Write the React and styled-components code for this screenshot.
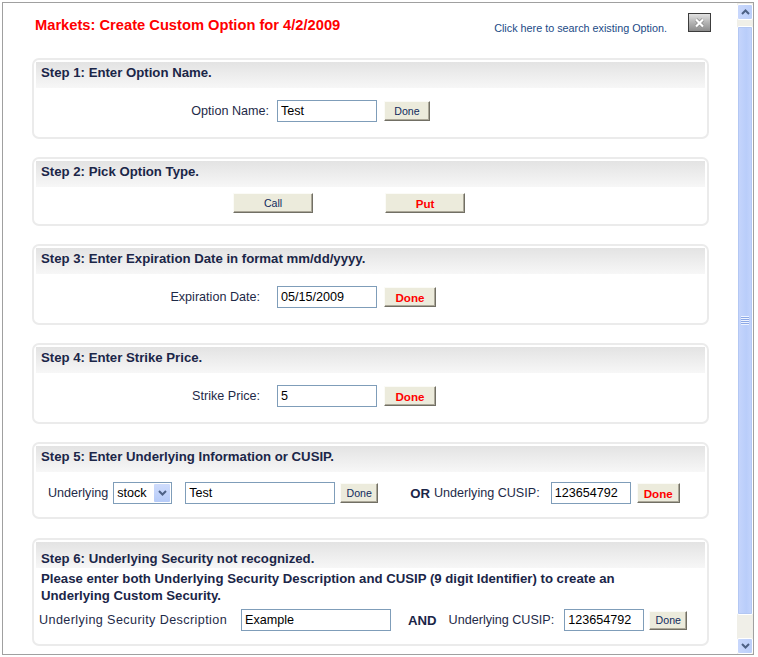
import React from 'react';
import styled, { createGlobalStyle } from 'styled-components';

const GlobalStyle = createGlobalStyle`
  html, body {
    margin: 0;
    padding: 0;
    background: #fff;
  }
  body {
    font-family: "Liberation Sans", Arial, sans-serif;
  }
`;

const Window = styled.div`
  margin: 2px 0 0 2px;
  width: 750px;
  height: 651px;
  border: 1px solid #a0a0a0;
  display: flex;
  background: #fff;
  overflow: hidden;
`;

const Content = styled.div`
  flex: 1;
  overflow: hidden;
  padding: 10px 28px 0 29px;
`;

const TopBar = styled.div`
  display: flex;
  align-items: flex-start;
  margin-right: -2px;
`;

const Title = styled.h1`
  margin: 4px 0 0 3px;
  font-size: 14.7px;
  line-height: 16px;
  font-weight: bold;
  color: #ff0000;
`;

const SearchLink = styled.a`
  margin: 9px 0 0 auto;
  font-size: 10.8px;
  line-height: 13px;
  color: #1a4a86;
  text-decoration: none;
  cursor: pointer;
`;

const CloseButton = styled.button`
  margin-left: 21px;
  width: 23px;
  height: 19px;
  padding: 0;
  border: 1px solid #3c3c3c;
  background: linear-gradient(#e2e2e2, #b4b4b4 50%, #8c8c8c);
  display: flex;
  align-items: center;
  justify-content: center;
  cursor: pointer;
`;

const StepList = styled.div`
  margin-top: 23px;
  display: flex;
  flex-direction: column;
  gap: 18px;
`;

const StepBox = styled.section`
  border: 2px solid #ebebeb;
  border-radius: 7px;
  padding: 2px;
  background: #fff;
  margin-top: ${p => p.$extra || 0}px;
`;

const StepHeader = styled.h2`
  margin: 0;
  height: 26px;
  box-sizing: border-box;
  padding: ${p => (p.$low ? '8.5px' : '2.5px')} 5px 0;
  background: linear-gradient(#e3e3e3, #f7f7f7);
  font-size: 13.2px;
  line-height: 16px;
  font-weight: bold;
  color: #1b2648;
`;

const StepBody = styled.div`
  padding: ${p => p.$pad};
`;

const Row = styled.div`
  display: flex;
  align-items: center;
  height: ${p => p.$h || 22}px;
  margin-top: ${p => p.$mt || 0}px;
`;

const Label = styled.span`
  font-size: 12.6px;
  color: #1e2a48;
  margin-left: ${p => p.$ml || 0}px;
  white-space: nowrap;
  ${p => (p.$w ? `width: ${p.$w}px; letter-spacing: 0.4px;` : '')}
`;

const LabelCell = styled(Label)`
  width: 233px;
  box-sizing: border-box;
  text-align: right;
  padding-right: ${p => p.$trail || 0}px;
`;

const Strong = styled.b`
  font-size: 13.2px;
  color: #1b2648;
  margin-left: ${p => p.$ml || 0}px;
`;

const TextInput = styled.input`
  width: ${p => p.$w}px;
  height: 22px;
  box-sizing: border-box;
  margin: 0 0 0 ${p => p.$ml || 0}px;
  padding: 0 3px;
  border: 1px solid #7f9db9;
  font-family: "Liberation Sans", Arial, sans-serif;
  font-size: 12.6px;
  color: #000;
  background: #fff;
  outline: none;
`;

const Button = styled.button`
  width: ${p => p.$w}px;
  height: ${p => p.$h || 20}px;
  margin-left: ${p => p.$ml || 0}px;
  padding: 0;
  box-sizing: border-box;
  background: #ecebdc;
  border: 1px solid;
  border-color: #fbfbf7 #716f64 #716f64 #fbfbf7;
  box-shadow: inset -1px -1px 0 #aca899;
  font-family: "Liberation Sans", Arial, sans-serif;
  font-size: ${p => (p.$red ? '11.6px' : '10.6px')};
  font-weight: ${p => (p.$red ? 'bold' : 'normal')};
  color: ${p => (p.$red ? '#ff0000' : '#102a5c')};
  cursor: pointer;
`;

const Para = styled.p`
  margin: 2px 0 0;
  padding: 0 5px;
  font-size: 13.2px;
  line-height: 17px;
  font-weight: bold;
  color: #1b2648;
`;

const SelectBox = styled.div`
  display: flex;
  width: 59px;
  height: 22px;
  box-sizing: border-box;
  margin-left: ${p => p.$ml || 0}px;
  border: 1px solid #7f9db9;
  background: #fff;
`;

const Select = styled.select`
  flex: 1;
  min-width: 0;
  appearance: none;
  border: none;
  outline: none;
  background: transparent;
  padding: 0 0 0 3px;
  font-family: "Liberation Sans", Arial, sans-serif;
  font-size: 12.6px;
  color: #000;
`;

const DropArrow = styled.div`
  width: 16px;
  margin: 1px;
  border-radius: 1px;
  background: linear-gradient(#cfdcfc, #b6cbf8);
  display: flex;
  align-items: center;
  justify-content: center;
`;

const Scrollbar = styled.div`
  width: 16px;
  padding-top: 1px;
  display: flex;
  flex-direction: column;
  background: #f0efe8;
`;

const ScrollButton = styled.div`
  height: 16px;
  box-sizing: border-box;
  border: 1px solid #fff;
  border-radius: 2px;
  background: linear-gradient(to right, #c8d7fc, #bccffa);
  display: flex;
  align-items: center;
  justify-content: center;
`;

const Thumb = styled.div`
  flex: 1;
  margin: 6px 0 23px;
  box-sizing: border-box;
  border: 1px solid #fff;
  outline: 1px solid #b3c7f3;
  outline-offset: -2px;
  border-radius: 2px;
  background: linear-gradient(to right, #c6d5fc, #b9cdfa 60%, #c4d4fc);
  display: flex;
  align-items: center;
  justify-content: center;
`;

const Grip = styled.div`
  width: 8px;
  height: 9px;
  background: repeating-linear-gradient(#eef3ff 0 1px, #8ca8e6 1px 2px);
`;

const Chevron = ({ up }) => (
  <svg width="9" height="6" viewBox="0 0 9 6">
    <polyline
      points={up ? '1,5 4.5,1.5 8,5' : '1,1 4.5,4.5 8,1'}
      fill="none"
      stroke="#4d6185"
      strokeWidth="2"
    />
  </svg>
);

const CloseIcon = () => (
  <svg width="11" height="10" viewBox="0 0 11 10">
    <path d="M2 1.5 L9 8.5 M9 1.5 L2 8.5" stroke="#8a8a8a" strokeWidth="3.6" />
    <path d="M2 1.5 L9 8.5 M9 1.5 L2 8.5" stroke="#fff" strokeWidth="2.2" />
  </svg>
);

export default function App() {
  return (
    <>
      <GlobalStyle />
      <Window>
        <Content>
          <TopBar>
            <Title>Markets: Create Custom Option for 4/2/2009</Title>
            <SearchLink>Click here to search existing Option.</SearchLink>
            <CloseButton aria-label="Close">
              <CloseIcon />
            </CloseButton>
          </TopBar>

          <StepList>
            <StepBox>
              <StepHeader>Step 1: Enter Option Name.</StepHeader>
              <StepBody $pad="12px 0 13px">
                <Row>
                  <LabelCell>Option Name:</LabelCell>
                  <TextInput $w={100} $ml={8} defaultValue="Test" />
                  <Button $w={46} $ml={7}>Done</Button>
                </Row>
              </StepBody>
            </StepBox>

            <StepBox>
              <StepHeader>Step 2: Pick Option Type.</StepHeader>
              <StepBody $pad="6px 0 9px 197px">
                <Row $h={20}>
                  <Button $w={80}>Call</Button>
                  <Button $w={80} $ml={72} $red>Put</Button>
                </Row>
              </StepBody>
            </StepBox>

            <StepBox>
              <StepHeader>Step 3: Enter Expiration Date in format mm/dd/yyyy.</StepHeader>
              <StepBody $pad="12px 0 13px">
                <Row>
                  <LabelCell $trail={9}>Expiration Date:</LabelCell>
                  <TextInput $w={100} $ml={8} defaultValue="05/15/2009" />
                  <Button $w={52} $ml={7} $red>Done</Button>
                </Row>
              </StepBody>
            </StepBox>

            <StepBox>
              <StepHeader>Step 4: Enter Strike Price.</StepHeader>
              <StepBody $pad="12px 0 13px">
                <Row>
                  <LabelCell $trail={9}>Strike Price:</LabelCell>
                  <TextInput $w={100} $ml={8} defaultValue="5" />
                  <Button $w={52} $ml={7} $red>Done</Button>
                </Row>
              </StepBody>
            </StepBox>

            <StepBox>
              <StepHeader>Step 5: Enter Underlying Information or CUSIP.</StepHeader>
              <StepBody $pad="10px 0 11px 12px">
                <Row>
                  <Label>Underlying</Label>
                  <SelectBox $ml={5}>
                    <Select defaultValue="stock">
                      <option value="stock">stock</option>
                      <option value="index">index</option>
                    </Select>
                    <DropArrow>
                      <Chevron />
                    </DropArrow>
                  </SelectBox>
                  <TextInput $w={150} $ml={13} defaultValue="Test" />
                  <Button $w={38} $ml={5}>Done</Button>
                  <Strong $ml={32}>OR</Strong>
                  <Label $ml={4}>Underlying CUSIP:</Label>
                  <TextInput $w={80} $ml={11} defaultValue="123654792" />
                  <Button $w={43} $ml={6} $red>Done</Button>
                </Row>
              </StepBody>
            </StepBox>

            <StepBox $extra={1}>
              <StepHeader $low>Step 6: Underlying Security not recognized.</StepHeader>
              <Para>
                Please enter both Underlying Security Description and CUSIP (9 digit Identifier) to create an
                <br />
                Underlying Custom Security.
              </Para>
              <StepBody $pad="0 0 11px 3px">
                <Row $mt={5}>
                  <Label $w={189}>Underlying Security Description</Label>
                  <TextInput $w={150} $ml={13} defaultValue="Example" />
                  <Strong $ml={17}>AND</Strong>
                  <Label $ml={12}>Underlying CUSIP:</Label>
                  <TextInput $w={80} $ml={10} defaultValue="123654792" />
                  <Button $w={38} $h={19} $ml={5}>Done</Button>
                </Row>
              </StepBody>
            </StepBox>
          </StepList>
        </Content>

        <Scrollbar>
          <ScrollButton>
            <Chevron up />
          </ScrollButton>
          <Thumb>
            <Grip />
          </Thumb>
          <ScrollButton>
            <Chevron />
          </ScrollButton>
        </Scrollbar>
      </Window>
    </>
  );
}
